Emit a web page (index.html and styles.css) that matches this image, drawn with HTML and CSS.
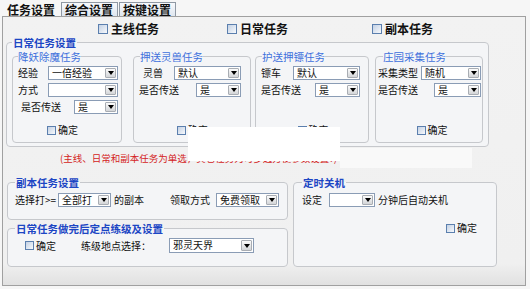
FILE: index.html
```html
<!DOCTYPE html>
<html lang="zh-CN">
<head>
  <meta charset="UTF-8" />
  <title>任务设置</title>
  <link rel="stylesheet" href="styles.css">
</head>
<body>

<div class="tabs">
  <span class="tab active">任务设置</span>
  <span class="tab t2">综合设置</span>
  <span class="tab t3">按键设置</span>
</div>

<div class="panel">
  <div class="main-checks">
    <label class="chk big"><span class="box"></span>主线任务</label>
    <label class="chk big"><span class="box"></span>日常任务</label>
    <label class="chk big"><span class="box"></span>副本任务</label>
  </div>

  <fieldset class="group daily">
    <legend>日常任务设置</legend>
    <div class="daily-grid">
      <fieldset class="sub g1">
        <legend>降妖除魔任务</legend>
        <div class="sub-body">
          <div class="row"><span>经验</span><span class="select" style="width:70px"><span class="val">一倍经验</span><span class="btn"></span></span></div>
          <div class="row"><span>方式</span><span class="select" style="width:70px"><span class="val"></span><span class="btn"></span></span></div>
          <div class="row"><span class="indent">是否传送</span><span class="select" style="width:44px"><span class="val">是</span><span class="btn"></span></span></div>
          <label class="chk ok"><span class="box"></span>确定</label>
        </div>
      </fieldset>
      <fieldset class="sub g2">
        <legend>押送灵兽任务</legend>
        <div class="sub-body">
          <div class="row"><span class="indent">灵兽</span><span class="select" style="width:67px"><span class="val">默认</span><span class="btn"></span></span></div>
          <div class="row"><span>是否传送</span><span class="select" style="width:45px"><span class="val">是</span><span class="btn"></span></span></div>
          <label class="chk ok"><span class="box"></span>确定</label>
        </div>
      </fieldset>
      <fieldset class="sub g3">
        <legend>护送押镖任务</legend>
        <div class="sub-body">
          <div class="row"><span>镖车</span><span class="select" style="width:67px"><span class="val">默认</span><span class="btn"></span></span></div>
          <div class="row"><span>是否传送</span><span class="select" style="width:45px"><span class="val">是</span><span class="btn"></span></span></div>
          <label class="chk ok"><span class="box"></span>确定</label>
        </div>
      </fieldset>
      <fieldset class="sub g4">
        <legend>庄园采集任务</legend>
        <div class="sub-body">
          <div class="row"><span>采集类型</span><span class="select" style="width:60px"><span class="val">随机</span><span class="btn"></span></span></div>
          <div class="row"><span>是否传送</span><span class="select" style="width:47px"><span class="val">是</span><span class="btn"></span></span></div>
          <label class="chk ok"><span class="box"></span>确定</label>
        </div>
      </fieldset>
    </div>
  </fieldset>

  <div class="note">(主线、日常和副本任务为单选，其它任务为可多选方便参数设置?)</div>

  <div class="bottom">
    <div class="left-col">
      <fieldset class="group dungeon">
        <legend>副本任务设置</legend>
        <div class="line">
          <span>选择打&gt;=</span>
          <span class="select sel-all" style="width:53px"><span class="val">全部打</span><span class="btn"></span></span>
          <span class="after-sel">的副本</span>
          <span class="mode-label">领取方式</span>
          <span class="select sel-free" style="width:63px"><span class="val">免费领取</span><span class="btn"></span></span>
        </div>
      </fieldset>
      <fieldset class="group level">
        <legend>日常任务做完后定点练级及设置</legend>
        <div class="line">
          <label class="chk lv-ok"><span class="box"></span>确定</label>
          <span class="place-label">练级地点选择：</span>
          <span class="select sel-place" style="width:85px"><span class="val">邪灵天界</span><span class="btn"></span></span>
        </div>
      </fieldset>
    </div>

    <fieldset class="group timer">
      <legend>定时关机</legend>
      <div class="line">
        <span>设定</span>
        <span class="select sel-min" style="width:46px"><span class="val"></span><span class="btn"></span></span>
        <span class="after-sel">分钟后自动关机</span>
      </div>
      <div class="timer-ok">
        <label class="chk"><span class="box"></span>确定</label>
      </div>
    </fieldset>
  </div>
</div>

<div class="popup"></div>
<div class="popup-shade"></div>

</body>
</html>
```

FILE: styles.css
```css
* { box-sizing: border-box; }

body {
  margin: 0;
  width: 530px;
  height: 289px;
  overflow: hidden;
  position: relative;
  background: #f6f6f6;
  font-family: "Noto Sans CJK SC", "Liberation Sans", sans-serif;
  font-size: 10px;
  line-height: 12px;
  color: #111;
  white-space: nowrap;
}

/* tabs */
.tabs {
  display: flex;
  align-items: flex-end;
  height: 16px;
  padding-left: 3px;
}

.tab {
  font-size: 12px;
  font-weight: bold;
  line-height: 13px;
  padding: 0 4px 0 3px;
  border: 1px solid #8f98a3;
  border-bottom: none;
  background: linear-gradient(#f7f9fc, #dfe6ef);
}

.tab.active {
  border-color: transparent;
  background: none;
  padding: 0 3px;
}

.t2 { margin-left: 2px; }
.t3 { margin-left: 1px; }

/* main panel */
.panel {
  margin-left: 2px;
  width: 524px;
  height: 270px;
  border: 1px solid #a0a0a0;
  background: linear-gradient(#f2f2f2 0, #f0f0f0 92%, #e1e1e1 100%);
}

.main-checks {
  display: grid;
  grid-template-columns: 129px 145px auto;
  align-items: center;
  height: 20px;
  padding: 4px 0 0 95px;
}

/* checkboxes */
.chk {
  display: inline-flex;
  align-items: center;
  gap: 2px;
  line-height: 12px;
}

.box {
  flex-shrink: 0;
  width: 9px;
  height: 9px;
  border: 1px solid #5b7fae;
  background: linear-gradient(135deg, #c3d1e4, #f7f9fc);
}

.chk.big {
  font-size: 12px;
  font-weight: bold;
  gap: 3px;
}

.chk.big .box {
  width: 10px;
  height: 10px;
}

/* group boxes */
fieldset {
  margin: 0;
  min-width: 0;
  border: 1px solid #c6c8cc;
  border-radius: 4px;
  background: #f4f5f7;
}

.group legend {
  padding: 0 1px;
  font-size: 10.5px;
  font-weight: bold;
  line-height: 11px;
  color: #1c46c4;
}

.daily {
  margin-left: 3px;
  width: 483px;
  padding: 3px 4px 3px 5px;
}

.daily-grid {
  display: grid;
  grid-template-columns: 121px 122px 120px 108px;
}

.sub {
  padding: 4px 3px 4px 5px;
}

.group .sub legend {
  padding: 0;
  font-size: 10.5px;
  font-weight: normal;
  line-height: 11px;
  color: #3d70dc;
}

.g1 { width: 110px; }
.g2 { width: 118px; padding-right: 9px; }
.g3 { width: 114px; padding-right: 8px; }
.g4 { width: 108px; padding-left: 2px; padding-right: 1px; }
.g2 legend, .g3 legend { margin-left: 1px; }
.g4 legend { margin-left: 5px; }

.sub-body {
  display: flex;
  flex-direction: column;
  gap: 3px;
  height: 72px;
}

.row {
  display: flex;
  justify-content: space-between;
  align-items: center;
  height: 14px;
}

.indent { padding-left: 3px; }
.g2 .indent { padding-left: 4px; }

.ok {
  align-self: center;
  margin: auto 0 2px 5px;
}

.g1 .ok {
  margin-left: 0;
  margin-right: 11px;
}

/* select boxes */
.select {
  display: flex;
  flex-shrink: 0;
  height: 14px;
  border: 1px solid #8a9cb5;
  background: #fff;
}

.val {
  flex: 1;
  padding-left: 3px;
  line-height: 12px;
}

.btn {
  position: relative;
  width: 11px;
  margin: 1px;
  border: 1px solid #a9adb3;
  border-radius: 1px;
  background: linear-gradient(#fbfbfb, #d3d5d8);
}

.btn::after {
  content: "";
  position: absolute;
  left: 50%;
  top: 50%;
  margin: -2px 0 0 -3px;
  border-left: 3px solid transparent;
  border-right: 3px solid transparent;
  border-top: 4px solid #000;
}

/* note */
.note {
  height: 22px;
  padding-left: 57px;
  font-size: 9.5px;
  line-height: 22px;
  color: #d42323;
}

/* bottom area */
.bottom {
  display: flex;
  margin-top: 8px;
}

.left-col {
  display: flex;
  flex-direction: column;
  gap: 3px;
  margin-left: 4px;
  width: 281px;
}

.dungeon {
  padding: 5px 7px 12px 7px;
}

.level {
  padding: 4px 7px 13px 7px;
}

.line {
  display: flex;
  align-items: center;
  height: 14px;
}

.line > span, .line > label { flex-shrink: 0; }

.level .line { height: 15px; }
.level .select { height: 15px; }

.sel-all { margin-left: 2px; }
.after-sel { margin-left: 3px; }
.mode-label { margin-left: 26px; }
.sel-free { margin-left: 6px; }

.lv-ok { margin-left: 10px; }
.place-label { margin-left: 25px; }
.sel-place { margin-left: 18px; }

.timer {
  margin-left: 5px;
  width: 204px;
  padding: 5px 8px 8px 8px;
}

.sel-min { margin-left: 7px; }

.timer-ok {
  display: flex;
  justify-content: flex-end;
  margin: 15px 11px 0 0;
}

/* popup window lying over the form */
.popup {
  position: absolute;
  left: 188px;
  top: 127px;
  width: 152px;
  height: 34px;
  background: #fff;
}

.popup-shade {
  position: absolute;
  left: 340px;
  top: 148px;
  width: 132px;
  height: 20px;
  background: #f9f9f9;
}
```
